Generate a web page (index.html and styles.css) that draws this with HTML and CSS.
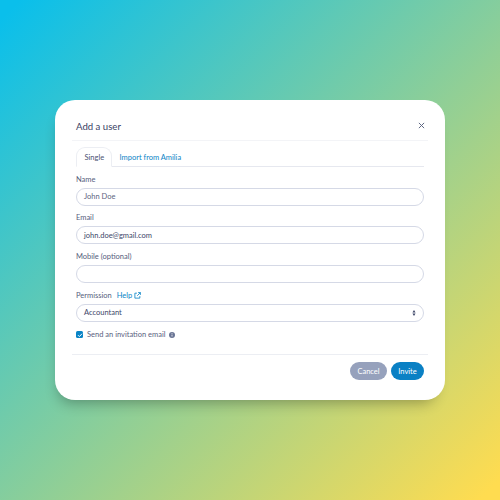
FILE: index.html
```html
<!DOCTYPE html>
<html lang="en">
<head>
<meta charset="utf-8">
<title>Add a user</title>
<link rel="stylesheet" href="styles.css">
</head>
<body>
<div class="modal">
  <header class="modal-header">
    <h1 class="modal-title">Add a user</h1>
    <svg class="close" viewBox="0 0 8 8" width="7" height="7"><path d="M1 1l6 6M7 1L1 7" stroke="#5b6480" stroke-width="1.1" fill="none"/></svg>
  </header>
  <div class="modal-body">
    <div class="tabs">
      <span class="tab active">Single</span>
      <span class="tab link">Import from Amilia</span>
    </div>
    <div class="field">
      <label class="label">Name</label>
      <div class="input placeholder">John Doe</div>
    </div>
    <div class="field">
      <label class="label">Email</label>
      <div class="input">john.doe@gmail.com</div>
    </div>
    <div class="field">
      <label class="label">Mobile (optional)</label>
      <div class="input"></div>
    </div>
    <div class="field">
      <div class="label-row">
        <label class="label">Permission</label>
        <span class="help">Help
          <svg viewBox="0 0 12 12" width="7" height="7"><path d="M5 2H1.5v8.5H10V7M7 1h4v4M11 1L5.5 6.5" stroke="#0a84c6" stroke-width="1.4" fill="none"/></svg>
        </span>
      </div>
      <div class="input select">Accountant
        <svg viewBox="0 0 6 10" width="4" height="6"><path d="M3 0l2.6 4H.4zM3 10L.4 6h5.2z" fill="#3d4668"/></svg>
      </div>
    </div>
    <div class="check-row">
      <span class="checkbox"><svg viewBox="0 0 8 8" width="6" height="6"><path d="M1.3 4.2l1.9 1.9 3.5-3.8" stroke="#fff" stroke-width="1.3" fill="none"/></svg></span>
      <span class="check-label">Send an invitation email</span>
      <svg viewBox="0 0 10 10" width="6" height="6"><circle cx="5" cy="5" r="5" fill="#6a7595"/><path d="M5 4.3v3.2M5 2v1.3" stroke="#fff" stroke-width="1.3"/></svg>
    </div>
  </div>
  <footer class="modal-footer">
    <span class="btn cancel">Cancel</span>
    <span class="btn invite">Invite</span>
  </footer>
</div>
</body>
</html>
```
FILE: styles.css
```css
* { box-sizing: border-box; }
html, body { height: 100%; }
body {
  margin: 0;
  width: 500px;
  height: 500px;
  display: flex;
  align-items: center;
  justify-content: center;
  background: linear-gradient(135deg, #0abfeb 2%, #ffdc50 98%);
  font-family: "Lato", "Noto Sans", sans-serif;
  color: #3d4668;
  font-size: 7.5px;
}
.modal {
  width: 390px;
  height: 300px;
  background: #fff;
  border-radius: 20px;
  padding: 0 17px;
  box-shadow: -3px 10px 14px -7px rgba(0, 0, 0, 0.3);
  display: flex;
  flex-direction: column;
}
.modal-header {
  height: 41px;
  padding: 0 3.5px 7px 4px;
  display: flex;
  align-items: flex-end;
  justify-content: space-between;
  border-bottom: 1px solid #f3f4f7;
}
.modal-title {
  margin: 0;
  font-size: 9.6px;
  font-weight: 400;
  line-height: 12px;
  color: #3a4265;
}
.close { margin-bottom: 4px; }
.modal-body {
  padding: 6px 4px 0;
  flex: 1;
}
.tabs {
  display: flex;
  height: 20px;
  border-bottom: 1px solid #e6e8ef;
}
.tab {
  display: flex;
  align-items: center;
  padding: 0 7.5px;
  height: 20px;
  font-size: 7.5px;
}
.tab.active {
  width: 36px;
  border: 1px solid #eceef3;
  border-bottom-color: #fff;
  border-radius: 9px 9px 0 0;
  color: #4a5273;
  background: #fff;
}
.tab.link { color: #0a84c6; }
.field { margin-top: 6.67px; }
.label, .label-row {
  display: flex;
  align-items: center;
  height: 11px;
  font-size: 7.5px;
  color: #565e7c;
}
.label-row { gap: 5px; }
.help {
  display: flex;
  align-items: center;
  gap: 2px;
  color: #0a84c6;
  font-size: 7.5px;
}
.input {
  display: flex;
  align-items: center;
  justify-content: space-between;
  height: 18px;
  margin-top: 3px;
  padding: 0 7px;
  border: 1px solid #d5d9e6;
  border-radius: 9px;
  font-size: 7.5px;
  color: #3d4668;
}
.placeholder { color: #5d6580; }
.check-row {
  display: flex;
  align-items: center;
  gap: 3px;
  margin-top: 9px;
  height: 8px;
  color: #5a6280;
}
.checkbox {
  width: 7px;
  height: 7px;
  border-radius: 1.5px;
  background: #0a84c6;
  display: flex;
  align-items: center;
  justify-content: center;
  margin-right: 1px;
}
.modal-footer {
  height: 46px;
  border-top: 1px solid #eceef3;
  display: flex;
  justify-content: flex-end;
  gap: 4px;
  padding: 7px 4px 0;
}
.btn {
  height: 18px;
  border-radius: 9px;
  display: flex;
  align-items: center;
  justify-content: center;
  color: #fff;
  font-size: 7.5px;
}
.cancel { width: 37px; background: #96a1bc; }
.invite { width: 33px; background: #0a80c4; }
```
